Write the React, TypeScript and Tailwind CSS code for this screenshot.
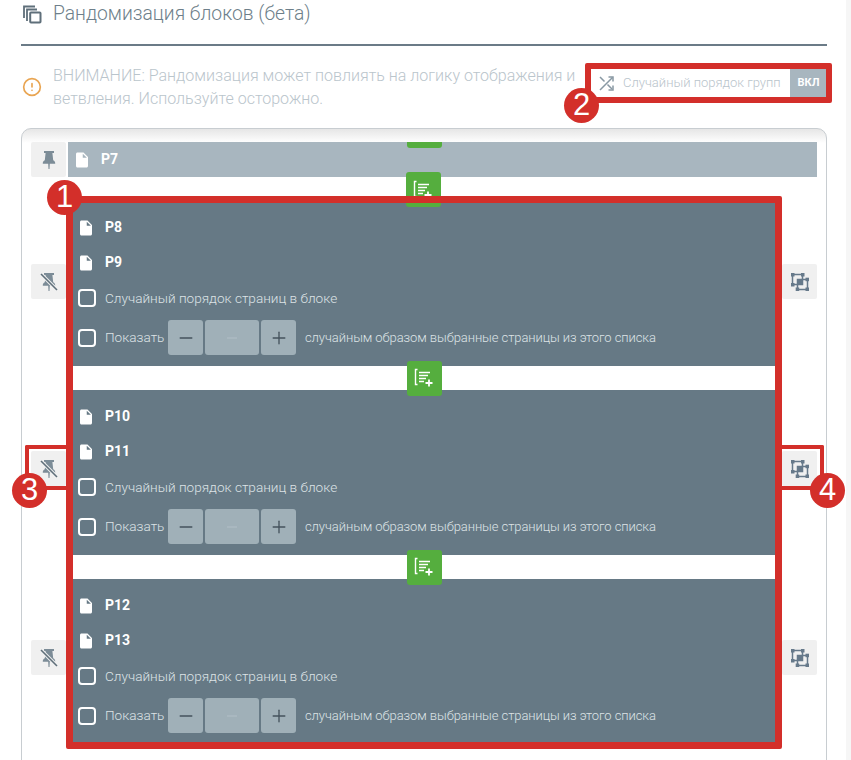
import { CircleAlert, Minus, Plus } from "lucide-react";
import { MdInsertDriveFile } from "react-icons/md";

function PagesIcon() {
  return (
    <svg width="19" height="19" viewBox="0 0 19 19" fill="none" stroke="#5f6f7a" strokeWidth="1.8">
      <path d="M1 13V1.5h11" />
      <path d="M4 16V4.5h10" />
      <rect x="7.2" y="7.5" width="10.3" height="10" rx="0.8" strokeWidth="2" />
    </svg>
  );
}

function ShuffleIcon() {
  return (
    <svg width="15" height="15" viewBox="0 0 15 15" fill="none" stroke="#8898a3" strokeWidth="1.5">
      <path d="M1 1l4.500 4.500M8.500 8.500l4.500 4.500M1 14 13.500 1.500" />
      <path d="M9.500 1H14v4.500M9.500 14H14V9.500" />
    </svg>
  );
}

function PinIcon({ off = false }: { off?: boolean }) {
  return (
    <svg width="20" height="20" viewBox="0 0 20 20" className="text-[#7c8c97]">
      <path
        fill="currentColor"
        d="M5 1h10v2h-1.6l.8 7.2c1.3.7 2 1.7 2 3v.6h-5.4L10.5 19h-1l-.3-5.2H3.8v-.6c0-1.3.7-2.3 2-3L6.600 3H5z"
      />
      {off && <path d="M1.500 1.500 18 18" stroke="#f0f0f0" strokeWidth="3.500" />}
      {off && <path d="M2 2l16 16" stroke="#5f6f7a" strokeWidth="1.600" />}
    </svg>
  );
}

function GroupIcon() {
  return (
    <svg width="20" height="20" viewBox="0 0 20 20" fill="none" stroke="#66798a" strokeWidth="1.500">
      <rect x="2.500" y="2.500" width="10" height="10" />
      <rect x="7.500" y="7.500" width="10" height="10" />
      <g fill="#66798a" stroke="none">
        <rect x="1" y="1" width="3.500" height="3.500" />
        <rect x="11" y="1" width="3.500" height="3.500" />
        <rect x="1" y="11" width="3.500" height="3.500" />
        <rect x="5.700" y="15.500" width="3.500" height="3.500" />
        <rect x="15.500" y="5.700" width="3.500" height="3.500" />
        <rect x="15.500" y="15.500" width="3.500" height="3.500" />
        <rect x="8" y="8" width="4" height="4" />
      </g>
    </svg>
  );
}

function AddButton({ className = "" }: { className?: string }) {
  return (
    <div className={`flex h-[35px] w-[35px] items-center justify-center rounded-[3px] bg-[#55ae3e] ${className}`}>
      <svg width="20" height="20" viewBox="0 0 20 20" fill="none" stroke="#ffffff" strokeWidth="1.400">
        <path d="M3.500 1.500H1.500v15h2" />
        <path d="M5 4.500h11M5 7.500h9M5 10.500h7M5 13.500h5" />
        <path d="M15 11.500v7M11.500 15h7" strokeWidth="1.800" />
      </svg>
    </div>
  );
}

function SideButton({ children }: { children: React.ReactNode }) {
  return (
    <div className="flex h-[35px] w-[35px] items-center justify-center rounded-[2px] bg-[#f0f0f0]">{children}</div>
  );
}

function PageRow({ name }: { name: string }) {
  return (
    <div className="-ml-[1px] flex h-[35px] items-center text-white">
      <MdInsertDriveFile size={18} />
      <span className="ml-[10px] text-[14px] font-bold">{name}</span>
    </div>
  );
}

function CheckBox() {
  return <div className="h-[18px] w-[18px] shrink-0 rounded-[4px] border-2 border-white" />;
}

function Block({ pages }: { pages: string[] }) {
  return (
    <div className="h-[165px] bg-[#667985] pt-[9px] pl-[5px]">
      {pages.map((p) => (
        <PageRow key={p} name={p} />
      ))}
      <div className="flex h-[36px] items-center gap-[9px] text-[13.6px] font-light text-[#dde3e6]">
        <CheckBox />
        <span>Случайный порядок страниц в блоке</span>
      </div>
      <div className="mt-[4px] flex h-[35px] items-center text-[13.6px] font-light text-[#dde3e6]">
        <CheckBox />
        <span className="ml-[9px] w-[63px]">Показать</span>
        <div className="flex h-[35px] gap-[2px]">
          <div className="flex w-[35px] items-center justify-center rounded-[3px] bg-[#a0b0b8] text-[#44525c]">
            <Minus size={20} strokeWidth={1.6} />
          </div>
          <div className="flex w-[54px] items-center justify-center rounded-[3px] bg-[#a0b0b8] text-[#b4c1c8]">
            <Minus size={16} strokeWidth={1.4} />
          </div>
          <div className="flex w-[35px] items-center justify-center rounded-[3px] bg-[#a0b0b8] text-[#44525c]">
            <Plus size={20} strokeWidth={1.6} />
          </div>
        </div>
        <span className="ml-[9px] text-[13px] tracking-[-0.08px]">
          случайным образом выбранные страницы из этого списка
        </span>
      </div>
    </div>
  );
}

function Gap() {
  return (
    <div className="flex h-[24px] items-center justify-center bg-white">
      <AddButton className="relative z-10" />
    </div>
  );
}

function Badge({ n, className }: { n: string; className: string }) {
  return (
    <div
      className={`absolute z-30 flex h-[35px] w-[35px] items-center justify-center rounded-full bg-[#d32f2a] font-['Liberation_Sans',sans-serif] text-[31px] text-white ${className}`}
    >
      {n}
    </div>
  );
}

export default function App() {
  return (
    <div className="relative h-[760px] overflow-hidden bg-white font-['Roboto',sans-serif]">
      <div className="absolute top-0 right-0 bottom-0 w-[5px] bg-[#f6f6f6]" />
      <div className="pr-[24px] pl-[21px]">
        <div className="flex h-[46px] items-start border-b-2 border-[#6b7b87]">
          <div className="flex h-[28px] items-center pl-[2px]">
            <PagesIcon />
            <span className="ml-[11px] text-[19.3px] font-light text-[#6e7f8a]">Рандомизация блоков (бета)</span>
          </div>
        </div>

        <div className="flex h-[82px] items-start justify-between pt-[18px]">
          <div className="flex items-center">
            <CircleAlert size={20} strokeWidth={2} className="ml-[1px] text-[#e9a552]" />
            <p className="ml-[11px] text-[16.05px] leading-[23px] font-light text-[#bac5cc]">
              <span className="block w-fit">ВНИМАНИЕ: Рандомизация может повлиять на логику отображения и</span>
              <span className="block w-fit">ветвления. Используйте осторожно.</span>
            </p>
          </div>
          <div className="mt-[5px] flex h-[28px] w-[237px] shrink-0 items-center">
            <div className="flex h-full flex-1 items-center pl-[9px] text-[13px] font-light whitespace-nowrap text-[#b9c4cb]">
              <ShuffleIcon />
              <span className="ml-[9px]">Случайный порядок групп</span>
            </div>
            <div className="flex h-full w-[37px] items-center justify-center bg-[#a8b6bf] text-[11px] font-bold text-white">
              ВКЛ
            </div>
          </div>
        </div>

        <div className="h-[700px] rounded-t-[10px] border border-[#c8cdd1] bg-gradient-to-b from-[#e6e6e6] to-white to-[14px] px-[9px] pt-[13px]">
          <div className="flex gap-[2px]">
            <SideButton>
              <PinIcon />
            </SideButton>
            <div className="relative flex h-[35px] flex-1 items-center bg-[#a8b6bf] pl-[5px] text-white">
              <MdInsertDriveFile size={18} />
              <span className="ml-[10px] text-[14px] font-bold">P7</span>
              <div className="absolute top-0 left-[339px] h-[6px] w-[35px] rounded-b-[3px] bg-[#55ae3e]" />
            </div>
          </div>

          <div className="flex h-[24px] justify-center pr-[2px]">
            <AddButton className="relative z-10 -mt-[5px]" />
          </div>

          <div className="flex">
            <div className="w-[42px] shrink-0">
              <div className="mt-[63px]">
                <SideButton>
                  <PinIcon off />
                </SideButton>
              </div>
              <div className="mt-[152px]">
                <SideButton>
                  <PinIcon off />
                </SideButton>
              </div>
              <div className="mt-[154px]">
                <SideButton>
                  <PinIcon off />
                </SideButton>
              </div>
            </div>

            <div className="w-[702px] shrink-0">
              <Block pages={["P8", "P9"]} />
              <Gap />
              <Block pages={["P10", "P11"]} />
              <Gap />
              <Block pages={["P12", "P13"]} />
            </div>

            <div className="ml-[7px] w-[35px] shrink-0">
              <div className="mt-[63px]">
                <SideButton>
                  <GroupIcon />
                </SideButton>
              </div>
              <div className="mt-[152px]">
                <SideButton>
                  <GroupIcon />
                </SideButton>
              </div>
              <div className="mt-[154px]">
                <SideButton>
                  <GroupIcon />
                </SideButton>
              </div>
            </div>
          </div>
        </div>
      </div>

      {/* red annotation frames */}
      <div className="absolute top-[196px] left-[66px] z-20 h-[553px] w-[716px] rounded-[2px] border-[7px] border-[#d32f2a]" />
      <div className="absolute top-[63px] left-[585px] z-20 h-[40px] w-[247px] rounded-[2px] border-[6px] border-[#d32f2a]" />
      <div className="absolute top-[445px] left-[25px] z-20 h-[45px] w-[45px] rounded-l-[2px] border-[4px] border-r-0 border-[#d32f2a]" />
      <div className="absolute top-[445px] left-[778px] z-20 h-[45px] w-[46px] rounded-r-[2px] border-[4px] border-l-0 border-[#d32f2a]" />
      <Badge n="1" className="top-[180px] left-[47px]" />
      <Badge n="2" className="top-[88px] left-[564px]" />
      <Badge n="3" className="top-[473px] left-[12px]" />
      <Badge n="4" className="top-[473px] left-[810px]" />
    </div>
  );
}
